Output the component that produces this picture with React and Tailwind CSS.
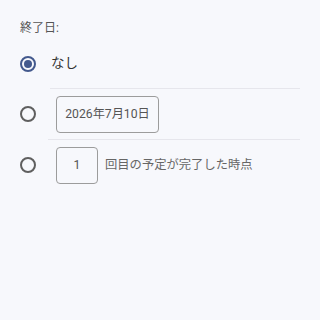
import React, { useState } from 'react';

const Radio = ({ checked, onClick }) => (
  <button
    type="button"
    onClick={onClick}
    className={`w-4 h-4 rounded-full border-2 flex items-center justify-center shrink-0 ${checked ? 'border-[#43598d]' : 'border-[#5f5f5f]'}`}
  >
    {checked && <span className="w-2 h-2 rounded-full bg-[#43598d]" />}
  </button>
);

const App = () => {
  const [end, setEnd] = useState('none');

  return (
    <div
      className="w-[320px] h-[320px] bg-[#f7f8fc] text-[#333] pl-[20px] pt-[20px]"
      style={{ fontFamily: 'Roboto, "Noto Sans CJK JP", sans-serif' }}
    >
      <div className="text-[12px] leading-4 text-[#555]">終了日:</div>

      <div className="flex items-center h-[49px] mt-[3px]">
        <Radio checked={end === 'none'} onClick={() => setEnd('none')} />
        <span className="ml-[15px] text-[13.5px] text-[#333]">なし</span>
      </div>
      <div className="h-px bg-[#e6e6ec] ml-[30px] mr-[20px]" />

      <div className="flex items-center h-[50px]">
        <Radio checked={end === 'date'} onClick={() => setEnd('date')} />
        <div className="ml-[20px] h-[37px] w-[103px] border border-[#9c9c9c] rounded-[4px] flex items-center justify-center text-[12.2px] text-[#555]">
          2026年7月10日
        </div>
      </div>
      <div className="h-px bg-[#e6e6ec] ml-[28px] mr-[20px]" />

      <div className="flex items-center h-[50px]">
        <Radio checked={end === 'count'} onClick={() => setEnd('count')} />
        <div className="ml-[20px] h-[37px] w-[42px] border border-[#9c9c9c] rounded-[4px] flex items-center justify-center text-[12.2px] text-[#555]">
          1
        </div>
        <span className="ml-[7px] text-[12.3px] text-[#666]">回目の予定が完了した時点</span>
      </div>
    </div>
  );
};

export default App;
